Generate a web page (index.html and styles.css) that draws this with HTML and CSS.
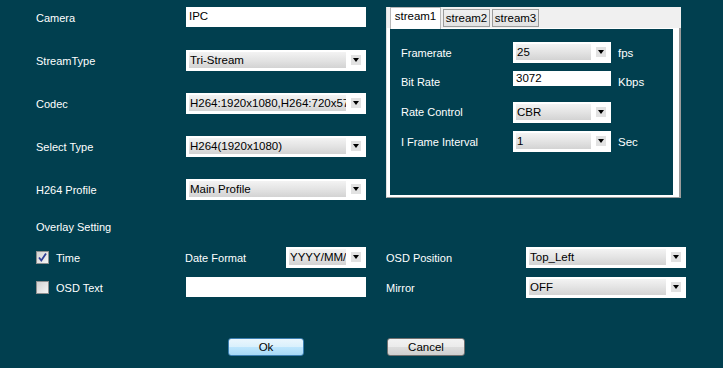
FILE: index.html
```html
<!DOCTYPE html>
<html lang="en">
<head>
    <meta charset="UTF-8">
    <title>Video Settings</title>
    <link rel="stylesheet" href="styles.css">
</head>
<body>
    <div class="page">
        <div class="top">
            <div class="form">
                <div class="row">
                    <span class="label">Camera</span>
                    <div class="text-input wide">IPC</div>
                </div>
                <div class="row">
                    <span class="label">StreamType</span>
                    <div class="select wide"><span class="value">Tri-Stream</span><span class="arrow"></span></div>
                </div>
                <div class="row">
                    <span class="label">Codec</span>
                    <div class="select wide"><span class="value">H264:1920x1080,H264:720x576,H264:352x288</span><span class="arrow"></span></div>
                </div>
                <div class="row">
                    <span class="label">Select Type</span>
                    <div class="select wide"><span class="value">H264(1920x1080)</span><span class="arrow"></span></div>
                </div>
                <div class="row">
                    <span class="label">H264 Profile</span>
                    <div class="select wide"><span class="value">Main Profile</span><span class="arrow"></span></div>
                </div>
            </div>

            <div class="tabs">
                <div class="tab-strip">
                    <div class="tab active">stream1</div>
                    <div class="tab">stream2</div>
                    <div class="tab">stream3</div>
                </div>
                <div class="tab-body">
                    <div class="tab-content">
                        <div class="srow">
                            <span class="slabel">Framerate</span>
                            <div class="select small"><span class="value">25</span><span class="arrow"></span></div>
                            <span class="unit">fps</span>
                        </div>
                        <div class="srow bitrate">
                            <span class="slabel">Bit Rate</span>
                            <div class="text-input small short">3072</div>
                            <span class="unit">Kbps</span>
                        </div>
                        <div class="srow tall">
                            <span class="slabel">Rate Control</span>
                            <div class="select small"><span class="value">CBR</span><span class="arrow"></span></div>
                        </div>
                        <div class="srow">
                            <span class="slabel">I Frame Interval</span>
                            <div class="select small"><span class="value">1</span><span class="arrow"></span></div>
                            <span class="unit">Sec</span>
                        </div>
                    </div>
                </div>
            </div>
        </div>

        <div class="overlay-title">Overlay Setting</div>

        <div class="overlay">
            <span class="checkbox checked">
                <svg width="11" height="11" viewBox="0 0 11 11"><path d="M2 5.5 L4.3 8.5 L9 1.5" fill="none" stroke="#2f3f96" stroke-width="1.8"/></svg>
            </span>
            <span class="label">Time</span>
            <span class="label shift">Date Format</span>
            <div class="select"><span class="value">YYYY/MM/DD</span><span class="arrow"></span></div>
            <span></span>
            <span class="label">OSD Position</span>
            <div class="select"><span class="value">Top_Left</span><span class="arrow"></span></div>

            <span class="checkbox"></span>
            <span class="label">OSD Text</span>
            <div class="text-input span2"></div>
            <span></span>
            <span class="label">Mirror</span>
            <div class="select"><span class="value">OFF</span><span class="arrow"></span></div>
        </div>

        <div class="buttons">
            <button class="btn default">Ok</button>
            <button class="btn">Cancel</button>
        </div>
    </div>
</body>
</html>
```

FILE: styles.css
```css
* {
    margin: 0;
    padding: 0;
    box-sizing: border-box;
}

body {
    font-family: 'Liberation Sans', Arial, sans-serif;
    font-size: 11px;
    background: #013f4f;
    color: #ffffff;
    height: 368px;
    overflow: hidden;
}

.page {
    padding: 7px 0 0 36px;
}

.top {
    display: flex;
    gap: 20px;
}

.form {
    width: 330px;
    display: flex;
    flex-direction: column;
    gap: 22px;
}

.row {
    display: flex;
    align-items: center;
    height: 21px;
}

.row .label {
    width: 150px;
}

.label {
    white-space: nowrap;
}

.label.shift {
    margin-left: -1px;
}

/* inputs */
.text-input {
    background: #ffffff;
    color: #000;
    height: 20px;
    padding: 2px 3px;
    font-size: 11.5px;
    line-height: 14px;
}

.text-input.wide {
    width: 180px;
    align-self: flex-start;
}

.text-input.short {
    height: 15px;
    padding: 1px 3px;
    line-height: 13px;
}

.select {
    display: flex;
    align-items: center;
    background: #ffffff;
    height: 21px;
    padding: 2px 5px 3px 3px;
}

.select.wide {
    width: 180px;
}

.select .value {
    flex: 1;
    height: 16px;
    background: linear-gradient(#f3f3f3, #e4e4e4 50%, #d3d3d3);
    color: #000;
    font-size: 11.5px;
    line-height: 17px;
    padding-left: 1px;
    white-space: nowrap;
    overflow: hidden;
}

.select .arrow {
    width: 10px;
    height: 10px;
    margin-left: 5px;
    background: #e2e2e2;
    display: flex;
    align-items: center;
    justify-content: center;
}

.select .arrow::after {
    content: '';
    border-left: 3.5px solid transparent;
    border-right: 3.5px solid transparent;
    border-top: 4px solid #000;
}

/* stream tabs */
.tabs {
    width: 295px;
    height: 191px;
    display: flex;
    flex-direction: column;
}

.tab-strip {
    height: 21px;
    background: #f0f0f0;
    display: flex;
    align-items: flex-end;
    gap: 2px;
    padding-left: 3px;
    border-left: 1px solid #e0e0e0;
}

.tab {
    width: 47px;
    height: 18px;
    margin-bottom: 1px;
    background: linear-gradient(#f0f0f0, #e2e2e2);
    border: 1px solid #9c9c9c;
    color: #000;
    font-size: 11.5px;
    text-align: center;
    line-height: 17px;
}

.tab.active {
    width: 51px;
    height: 22px;
    margin-bottom: -1px;
    background: #ffffff;
    border-color: #b8b8b8;
    border-bottom: none;
    line-height: 17px;
    position: relative;
    z-index: 1;
}

.tab-body {
    flex: 1;
    background: #ffffff;
    padding: 1px 6px 2px 3px;
    border-left: 1px solid #e0e0e0;
    border-right: 2px solid #9c9c9c;
    border-bottom: 1px solid #9c9c9c;
    display: flex;
}

.tab-content {
    flex: 1;
    background: #013f4f;
    padding: 13px 0 0 11px;
    display: flex;
    flex-direction: column;
    gap: 8px;
}

.srow {
    display: flex;
    align-items: center;
    height: 21px;
}

.srow.bitrate,
.srow.tall {
    height: 22px;
}

.srow.bitrate .text-input {
    align-self: flex-start;
}

.slabel {
    width: 112px;
    white-space: nowrap;
}

.small {
    width: 98px;
}

.unit {
    margin-left: 7px;
    font-size: 11.5px;
}

/* overlay */
.overlay-title {
    margin-top: 21px;
    line-height: 13px;
}

.overlay {
    margin-top: 13px;
    display: grid;
    grid-template-columns: 20px 130px 100px 80px 20px 140px 160px;
    grid-auto-rows: 21px;
    row-gap: 9px;
    align-items: center;
}

.overlay .text-input.span2 {
    grid-column: 3 / 5;
    align-self: start;
}

.checkbox {
    width: 13px;
    height: 13px;
    border: 1px solid #8e8f8f;
    background: linear-gradient(135deg, #d2d2d2, #f6f6f6);
    display: flex;
    align-items: center;
    justify-content: center;
}

.checkbox svg {
    display: block;
}

/* buttons */
.buttons {
    margin-top: 40px;
    padding-left: 192px;
    display: flex;
    gap: 83px;
}

.btn {
    font-family: inherit;
    font-size: 11.5px;
    color: #000;
    width: 78px;
    height: 18px;
    border: 1px solid #707070;
    border-radius: 3px;
    background: linear-gradient(#f2f2f2, #ebebeb 50%, #dddddd 50%, #cfcfcf);
    line-height: 15px;
}

.btn.default {
    width: 76px;
    border-color: #3c7fb1;
    background: linear-gradient(#eaf6fd, #d9f0fc 50%, #bee6fd 50%, #a7d9f5);
}
```
